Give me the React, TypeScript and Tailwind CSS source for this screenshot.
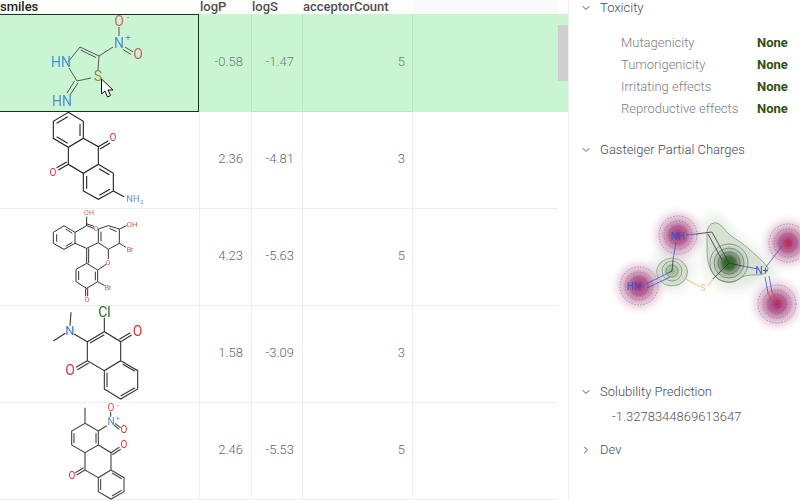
import { ChevronDown, ChevronRight } from 'lucide-react'

/* Drawing helpers: points are page pixels * 3, as read from the zoomed reference */
type Pt = [number, number]

const Bonds = ({ d, color = '#333', w = 1 }: { d: string; color?: string; w?: number }) => (
  <path d={d} fill="none" stroke={color} strokeWidth={w} />
)

const Atom = ({ x, y, t, c, s = 13 }: { x: number; y: number; t: string; c: string; s?: number }) => (
  <text x={x} y={y + s * 0.36} fontSize={s} fontWeight={400} fill={c} textAnchor="middle" fontFamily="Roboto, sans-serif">
    {t}
  </text>
)

const ring = (p: Pt[]) => 'M' + p.map((q) => `${q[0] / 3} ${q[1] / 3}`).join('L') + 'Z'
const line = (p: Pt[]) => 'M' + p.map((q) => `${q[0] / 3} ${q[1] / 3}`).join('L')

const MolOne = () => (
  <svg viewBox="0 14 199 98" className="h-full w-full overflow-visible blur-[0.3px]">
    <Bonds color="#555" d="M68 62L80 47L99 56L98 70M80.500 50L96 57.500M69 68L77 81L91 78M99 56L113 47M74.500 81L67 93M78 83L70 95" />
    <Bonds color="#555" d="M119 36V27M125 47L133 52M123 49.500L131 54.500" />
    <Atom x={61} y={62} t="HN" c="#4a90d9" s={14} />
    <Atom x={62} y={101} t="HN" c="#4a90d9" s={14} />
    <Atom x={98} y={76} t="S" c="#8f8a4a" s={14} />
    <Atom x={119} y={43} t="N" c="#4a90d9" s={14} />
    <Atom x={128} y={38} t="+" c="#4a90d9" s={9} />
    <Atom x={119} y={21} t="O" c="#d0616a" s={14} />
    <Atom x={128} y={17} t="-" c="#d0616a" s={9} />
    <Atom x={138} y={54} t="O" c="#d0616a" s={14} />
  </svg>
)

const MolTwo = () => (
  <svg viewBox="0 112 199 96" className="h-full w-full overflow-visible blur-[0.3px]">
    <Bonds
      w={1.1}
      color="#222"
      d={
        ring([[205, 337], [250, 364], [250, 415], [205, 442], [160, 415], [160, 364]]) +
        line([[250, 415], [295, 440], [295, 493], [250, 520], [205, 493], [205, 442]]) +
        ring([[295, 493], [340, 520], [340, 573], [295, 598], [250, 573], [250, 520]]) +
        line([[295, 440], [325, 422]]) +
        line([[300, 447], [330, 429]]) +
        line([[205, 493], [175, 510]]) +
        line([[200, 486], [170, 503]]) +
        line([[340, 573], [372, 590]]) +
        line([[170, 370], [203, 350]]) +
        line([[240, 372], [240, 408]]) +
        line([[170, 410], [203, 430]]) +
        line([[260, 528], [260, 566]]) +
        line([[298, 586], [330, 568]]) +
        line([[297, 506], [328, 524]])
      }
    />
    <Atom x={113} y={137.500} t="O" c="#e0323c" s={10} />
    <Atom x={53} y={172} t="O" c="#e0323c" s={10} />
    <Atom x={133} y={199} t="NH" c="#5a8ad8" s={9} />
    <Atom x={142} y={202} t="2" c="#5a8ad8" s={6} />
  </svg>
)

const MolThree = () => (
  <svg viewBox="0 209 199 96" className="h-full w-full overflow-visible blur-[0.4px]">
    <g transform="translate(0 205)">
      <Bonds
        color="#333"
        d={
          ring([[160, 82], [192, 62], [225, 82], [225, 115], [192, 133], [160, 115]]) +
          line([[170, 88], [170, 110]]) +
          line([[197, 72], [217, 85]]) +
          line([[197, 124], [217, 112]]) +
          line([[225, 82], [260, 62], [260, 35]]) +
          line([[260, 62], [282, 70]]) +
          line([[258, 56], [282, 64]]) +
          line([[225, 115], [260, 130], [295, 113], [295, 72], [325, 62], [358, 72], [358, 115], [325, 133], [295, 113]]) +
          line([[303, 80], [303, 108]]) +
          line([[328, 70], [350, 80]]) +
          line([[358, 72], [380, 62]]) +
          line([[358, 115], [378, 127]]) +
          line([[325, 133], [325, 162]]) +
          line([[318, 178], [293, 195]]) +
          line([[260, 130], [260, 175]]) +
          line([[266, 130], [266, 175]]) +
          ring([[260, 175], [293, 195], [293, 230], [260, 250], [228, 230], [228, 193]]) +
          line([[293, 230], [314, 242]]) +
          line([[257, 250], [257, 274]]) +
          line([[263, 250], [263, 274]]) +
          line([[236, 198], [236, 225]]) +
          line([[286, 200], [286, 226]])
        }
      />
      <Atom x={89} y={7.500} t="OH" c="#d9605a" s={7} />
      <Atom x={96} y={23} t="O" c="#e0504a" s={7} />
      <Atom x={132} y={19.500} t="OH" c="#d9605a" s={8} />
      <Atom x={130} y={44.500} t="Br" c="#a85a5a" s={7} />
      <Atom x={108} y={57.500} t="O" c="#e0504a" s={7} />
      <Atom x={108} y={82.500} t="Br" c="#a85a5a" s={7} />
      <Atom x={87} y={94.500} t="O" c="#e0504a" s={7} />
    </g>
  </svg>
)

const MolFour = () => (
  <svg viewBox="0 306 199 96" className="h-full w-full overflow-visible blur-[0.3px]">
    <g transform="translate(0 205)">
      <Bonds
        color="#333"
        w={1.1}
        d={
          line([[210, 362], [213, 322]]) +
          line([[196, 385], [160, 408]]) +
          line([[222, 387], [262, 410]]) +
          ring([[262, 410], [313, 380], [362, 410], [362, 467], [313, 497], [262, 467]]) +
          line([[270, 414], [313, 389]]) +
          line([[313, 380], [313, 338]]) +
          line([[362, 410], [395, 390]]) +
          line([[358, 403], [391, 383]]) +
          line([[262, 467], [228, 487]]) +
          line([[266, 474], [232, 494]]) +
          ring([[362, 467], [413, 497], [413, 552], [362, 582], [313, 552], [313, 497]]) +
          line([[368, 478], [405, 499]]) +
          line([[321, 503], [321, 547]]) +
          line([[362, 573], [405, 548]])
        }
      />
      <Atom x={70} y={125.500} t="N" c="#3f74c4" />
      <Atom x={104.500} y={106.500} t="Cl" c="#2c6b22" s={14} />
      <Atom x={137.500} y={125.500} t="O" c="#e0323c" s={14} />
      <Atom x={70} y={164.500} t="O" c="#e0323c" s={14} />
    </g>
  </svg>
)

const MolFive = () => (
  <svg viewBox="0 403 199 96" className="h-full w-full overflow-visible blur-[0.3px]">
    <g transform="translate(0 205)">
      <Bonds
        color="#444"
        w={1.1}
        d={
          line([[255, 608], [255, 655]]) +
          ring([[255, 655], [295, 678], [295, 720], [255, 743], [215, 720], [215, 678]]) +
          line([[295, 678], [320, 662]]) +
          line([[332, 635], [332, 620]]) +
          line([[345, 655], [362, 668]]) +
          line([[342, 660], [358, 673]]) +
          line([[295, 720], [333, 743], [333, 795], [295, 818], [255, 795], [255, 743]]) +
          line([[333, 743], [358, 727]]) +
          line([[337, 749], [362, 733]]) +
          line([[255, 795], [230, 810]]) +
          line([[251, 788], [226, 803]]) +
          ring([[333, 795], [372, 818], [372, 860], [333, 882], [295, 860], [295, 818]]) +
          line([[222, 685], [222, 715]]) +
          line([[288, 685], [288, 715]]) +
          line([[302, 855], [302, 822]]) +
          line([[336, 873], [365, 856]]) +
          line([[336, 804], [365, 821]])
        }
      />
      <Atom x={111} y={216.500} t="N" c="#4a80d0" s={10} />
      <Atom x={118} y={213} t="+" c="#4a80d0" s={6} />
      <Atom x={111} y={202.500} t="O" c="#e0504a" s={10} />
      <Atom x={118} y={200.500} t="-" c="#e0504a" s={7} />
      <Atom x={124} y={224.500} t="O" c="#e0323c" s={10} />
      <Atom x={124} y={239.500} t="O" c="#e0323c" s={10} />
      <Atom x={72} y={270} t="O" c="#e0323c" s={10} />
    </g>
  </svg>
)

const rows = [
  { logP: '-0.58', logS: '-1.47', count: 5, mol: <MolOne /> },
  { logP: '2.36', logS: '-4.81', count: 3, mol: <MolTwo /> },
  { logP: '4.23', logS: '-5.63', count: 5, mol: <MolThree /> },
  { logP: '1.58', logS: '-3.09', count: 3, mol: <MolFour /> },
  { logP: '2.46', logS: '-5.53', count: 5, mol: <MolFive /> },
]

const redBlobs: Pt[] = [[678, 235], [639, 286], [788, 243], [777, 304]]

const ChargeMap = () => (
  <svg viewBox="569 156 231 228" className="h-[228px] w-[231px] blur-[0.35px]">
    <defs>
      <radialGradient id="red">
        <stop offset="0%" stopColor="#962070" stopOpacity="0.95" />
        <stop offset="30%" stopColor="#a8457f" stopOpacity="0.8" />
        <stop offset="60%" stopColor="#cf9cbc" stopOpacity="0.55" />
        <stop offset="100%" stopColor="#f6ecf2" stopOpacity="0" />
      </radialGradient>
      <radialGradient id="greenBig">
        <stop offset="0%" stopColor="#1c7a10" />
        <stop offset="28%" stopColor="#3f6a38" />
        <stop offset="50%" stopColor="#7d917c" stopOpacity="0.9" />
        <stop offset="100%" stopColor="#ccd8c9" stopOpacity="0.2" />
      </radialGradient>
      <radialGradient id="greenSmall">
        <stop offset="0%" stopColor="#8fb086" />
        <stop offset="55%" stopColor="#b4c6af" stopOpacity="0.9" />
        <stop offset="100%" stopColor="#dce6d9" stopOpacity="0.3" />
      </radialGradient>
      <filter id="soft" x="-30%" y="-30%" width="160%" height="160%">
        <feGaussianBlur stdDeviation="6" />
      </filter>
    </defs>
    {/* soft halo around the molecule */}
    <g filter="url(#soft)" fill="#e3ebe1">
      <path d="M703 222Q716 206 726 224Q736 238 750 246Q772 262 778 274Q750 290 726 290Q702 280 703 250Z" />
      <circle cx={672} cy={270} r={20} />
    </g>
    <path
      d="M707 232C708 224 714 221 719 224C724 227 726 232 730 235C737 240 744 244 750 250C757 256 764 262 768 268C768 273 763 275 757 275C750 275 744 275 739 279C733 284 724 283 718 279C710 273 707 262 707 250Z"
      fill="#d6e0d3"
      stroke="#7b8a7c"
      strokeWidth={0.7}
    />
    <ellipse cx={672} cy={272} rx={15.500} ry={14} fill="#d2ded0" stroke="#7b8a7c" strokeWidth={0.7} />
    <circle cx={729} cy={263} r={19} fill="url(#greenBig)" />
    <circle cx={672} cy={271} r={11} fill="url(#greenSmall)" />
    {[7, 11, 15, 19].map((r) => (
      <circle key={r} cx={729} cy={263} r={r} fill="none" stroke="#4f6450" strokeWidth={0.6} />
    ))}
    {[6, 10].map((r) => (
      <circle key={r} cx={672} cy={271} r={r} fill="none" stroke="#5f7560" strokeWidth={0.6} />
    ))}
    {redBlobs.map((p) => (
      <g key={p[0]}>
        <circle cx={p[0]} cy={p[1]} r={30} fill="url(#red)" />
        <circle cx={p[0]} cy={p[1]} r={19} fill="none" stroke="#80707a" strokeWidth={0.6} strokeDasharray="1.500 1.500" />
        <circle cx={p[0]} cy={p[1]} r={14} fill="none" stroke="#8a4f78" strokeWidth={0.5} strokeDasharray="1.500 1.500" />
        <circle cx={p[0]} cy={p[1]} r={9} fill="none" stroke="#8a3f70" strokeWidth={0.5} strokeDasharray="1.500 1.500" />
      </g>
    ))}
    {/* bonds */}
    <Bonds color="#3a55c8" w={0.8} d="M686 235L696 234M676 242L673 260M646 284L668 273M647 288L670 277M742 266L758 269M766 267L782 246M769 276L772 292M765 277L768 293" />
    <Bonds color="#333" w={0.8} d="M696 234L712 232L729 263L742 266M708 234L722 260M729 263L713 279M672 271L673 260M672 271L668 273" />
    <Bonds color="#f0c987" w={1.1} d="M686 279L700 287M708 286L713 279" />
    <Bonds color="#d84444" w={0.8} d="M782 246L788 243M772 292L776 301M768 293L773 303" />
    <Atom x={678} y={236} t="NH" c="#3a55c8" s={10} />
    <Atom x={634} y={286} t="HN" c="#3a55c8" s={10} />
    <Atom x={703} y={288} t="S" c="#e8c27a" s={9} />
    <Atom x={762} y={270} t="N+" c="#3a55c8" s={10} />
    <Atom x={789} y={243} t="O" c="#e02b2b" s={10} />
    <Atom x={778} y={304} t="O" c="#e02b2b" s={10} />
  </svg>
)

const toxicity = ['Mutagenicity', 'Tumorigenicity', 'Irritating effects', 'Reproductive effects']

const PaneHeader = ({ title, open = true }: { title: string; open?: boolean }) => (
  <div className="flex h-[14px] items-center pt-[2px] text-[13px] font-light text-[#3f4a54]">
    <span className="flex w-[31px] justify-end pr-[8px] text-[#4d5761]">
      {open ? <ChevronDown size={12} strokeWidth={2} /> : <ChevronRight size={12} strokeWidth={2} />}
    </span>
    {title}
  </div>
)

const App: React.FC = () => {
  return (
    <div className="flex h-[500px] w-[800px] overflow-hidden bg-white font-['Roboto',sans-serif]">
      {/* GRID */}
      <div className="relative h-full w-[568px] shrink-0">
        <div className="flex h-[14px] text-[13px] font-medium leading-[14px] text-[#505050]">
          <div className="w-[199px] text-[#222]">smiles</div>
          <div className="w-[52px] pl-[1px]">logP</div>
          <div className="w-[51px] pl-[1px]">logS</div>
          <div className="w-[111px] pl-[1px]">acceptorCount</div>
          <div className="w-[145px] bg-[#fafafa]" />
        </div>

        {rows.map((row, id) => (
          <div
            key={id}
            className={`flex text-[13px] font-light ${id == 0 ? 'h-[98px] bg-[#c9f5d3] text-[#6b8371]' : 'h-[97px] text-[#666666]'}`}>
            <div
              className={`w-[199px] shrink-0 ${id == 0 ? 'h-[98px] shadow-[inset_-1px_0_0_#16331c,inset_0_1px_0_#16331c,inset_0_-1px_0_#16331c]' : 'h-[97px] border-b border-[#eeeeee]'}`}>
              {row.mol}
            </div>
            <div className={`flex w-[52px] items-center justify-end border-b pb-[2px] pr-[8px] ${id == 0 ? 'border-[#c9f5d3]' : 'border-l border-[#eeeeee]'}`}>
              {row.logP}
            </div>
            <div className={`flex w-[51px] items-center justify-end border-b border-l pb-[2px] pr-[8px] ${id == 0 ? 'border-[#bde6c7]' : 'border-[#eeeeee]'}`}>
              {row.logS}
            </div>
            <div className={`flex w-[111px] items-center justify-end border-b border-l border-r pb-[2px] pr-[7px] ${id == 0 ? 'border-[#bde6c7]' : 'border-[#eeeeee]'}`}>
              {row.count}
            </div>
            <div className={`w-[145px] ${id == 0 ? '' : 'border-b border-[#eeeeee]'}`} />
          </div>
        ))}

        {/* scrollbar thumb */}
        <div className="absolute left-[558px] top-[25px] h-[56px] w-[10px] bg-[#cfcfcf]" />

        {/* mouse pointer */}
        <svg className="absolute left-[100px] top-[78px] h-[22px] w-[16px]" viewBox="0 0 16 22">
          <path d="M1.500 1L1.500 16L5 13L7.500 19L10.500 17.500L8 12L13 12Z" fill="#fff" stroke="#111" strokeWidth={1} />
        </svg>
      </div>

      {/* SIDEBAR */}
      <div className="h-full w-[232px] shrink-0 border-l border-[#eeeeee]">
        <PaneHeader title="Toxicity" />
        <div className="mt-[18px]">
          {toxicity.map((name) => (
            <div key={name} className="flex h-[22px] items-center text-[13px]">
              <span className="ml-[52px] w-[136px] font-light text-[#7d7d7d]">{name}</span>
              <span className="font-bold text-[#2f5210]">None</span>
            </div>
          ))}
        </div>
        <div className="mt-[22px]">
          <PaneHeader title="Gasteiger Partial Charges" />
        </div>
        <ChargeMap />
        <PaneHeader title="Solubility Prediction" />
        <div className="mt-[8px] flex h-[22px] items-center pl-[43px] text-[13px] font-light text-[#555555]">
          -1.3278344869613647
        </div>
        <div className="mt-[14px]">
          <PaneHeader title="Dev" open={false} />
        </div>
      </div>
    </div>
  )
}

export default App
